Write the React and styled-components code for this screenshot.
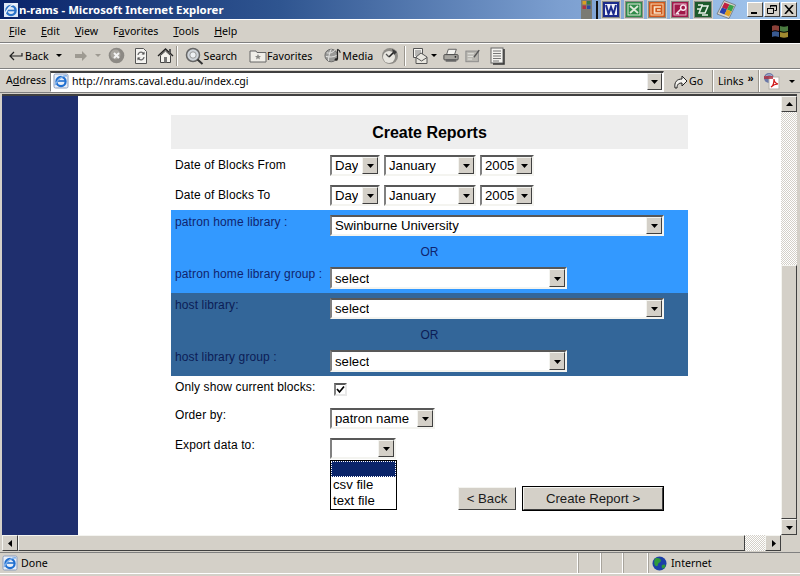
import React from "react";
import styled, { createGlobalStyle } from "styled-components";

const Global = createGlobalStyle`
  html, body { margin: 0; padding: 0; background: #d4d0c8; }
  #root { width: 800px; height: 576px; overflow: hidden; }
`;

const UI = `"Noto Sans", "DejaVu Sans", sans-serif`;
const WEB = `"Liberation Sans", Arial, sans-serif`;

const Win = styled.div`
  width: 800px; height: 576px; display: flex; flex-direction: column;
  background: #d4d0c8; overflow: hidden; font-family: ${UI}; color: #000;
`;
const TitleBar = styled.div`
  height: 19px; flex: none; display: flex; align-items: center; padding: 0 3px 0 3px;
  background: linear-gradient(90deg, #0a246a 0%, #2f5590 35%, #7c9fd0 70%, #a6caf0 100%);
`;
const TitleText = styled.span`
  color: #fff; font: bold 11.4px ${UI}; margin-left: 0; white-space: nowrap;
`;
const Tray = styled.div`
  margin-left: auto; display: flex; align-items: center; gap: 3px; margin-right: 11px;
`;
const TrayDivider = styled.span`
  width: 2px; height: 18px; background: #111; margin: 0 0 0 1px;
`;
const WinButtons = styled.div` display: flex; gap: 1px; `;
const WinButton = styled.button`
  width: 16px; height: 15px; padding: 0;
  background: #d4d0c8; border: 1px solid; border-color: #fff #404040 #404040 #fff;
  display: flex; align-items: center; justify-content: center;
`;
const MenuBar = styled.div`
  flex: none; display: flex; align-items: center; position: relative; box-sizing: border-box; height: 24px;
  border-top: 1px solid #fff; border-bottom: 1px solid #808080; padding: 0 0 1px 9px; gap: 15px;
  font-size: 10.6px;
`;
const MenuItem = styled.span` u { text-decoration: underline; } `;
const Flag = styled.div`
  position: absolute; right: 0; top: 0; width: 40px; height: 23px; background: #000;
  display: flex; align-items: center; justify-content: center;
`;
const Toolbar = styled.div`
  box-sizing: border-box; height: 26px; flex: none; display: flex; align-items: center; padding: 0 0 1px 8px;
  border-top: 1px solid #fff; border-bottom: 1px solid #808080;
  font-size: 10.6px;
`;
const Tool = styled.div`
  display: flex; align-items: center; gap: ${p => p.$gap ?? 0}px; margin-left: ${p => p.$ml || 0}px; white-space: nowrap;
`;
const Sep = styled.span`
  width: 1px; height: 20px; background: #9a968e; border-right: 1px solid #fff; flex: none;
  margin: 0 ${p => p.$r}px 0 ${p => p.$l}px;
`;
const Caret = styled.span`
  width: 0; height: 0; border: 3px solid transparent; border-top: 3px solid ${p => p.$c || "#000"}; border-bottom: 0; display: inline-block;
`;
const AddressBar = styled.div`
  box-sizing: border-box; height: 24px; flex: none; display: flex; align-items: center; padding-left: 6px;
  border-top: 1px solid #fff; border-bottom: 1px solid #808080; font-size: 10.6px;
`;
const AddressLabel = styled.span` width: 44px; flex: none; padding-bottom: 2px; `;
const AddressInput = styled.div`
  width: 614px; height: 21px; box-sizing: border-box; flex: none; background: #fff;
  border: 1px solid; border-color: #404040 #fff #fff #808080; border-top-width: 2px;
  display: flex; align-items: center; padding: 0 0 1px 2px; gap: 3px; position: relative;
  font: 10.6px ${UI};
`;
const AddressArrow = styled.span`
  position: absolute; right: 1px; top: 0; bottom: 1px; width: 15px;
  background: #d4d0c8; border: 1px solid; border-color: #eee #404040 #404040 #eee; box-sizing: border-box;
  display: flex; align-items: center; justify-content: center;
`;
const AddrCell = styled.div`
  height: 22px; display: flex; align-items: center; flex: none; box-sizing: border-box;
  width: ${p => p.$w}px; padding-left: ${p => p.$pl || 0}px; gap: ${p => p.$gap || 0}px;
  border-right: ${p => p.$line ? "1px solid #fff" : "0"};
  box-shadow: ${p => p.$line ? "inset -1px 0 0 #9a968e" : "none"};
`;
const Chevron = styled.span` font: bold 11px ${WEB}; position: relative; top: -3px; `;
const Viewport = styled.div`
  flex: 1; min-height: 0; display: flex; margin: 1px 3px 0 2px;
  border-top: 2px solid #404040;
`;
const Sidebar = styled.div` width: 76px; flex: none; background: #1f2f6e; `;
const Page = styled.div` flex: 1; background: #fff; padding: 19px 0 0 93px; min-width: 0; `;
const VBar = styled.div` width: 16px; flex: none; display: flex; flex-direction: column; background: #d4d0c8; `;
const ScrollBtn = styled.div`
  width: 16px; height: 16px; flex: none; box-sizing: border-box;
  background: #d4d0c8; border: 1px solid; border-color: #f4f4f0 #404040 #404040 #f4f4f0;
  display: flex; align-items: center; justify-content: center;
`;
const Dither = styled.div`
  flex: none; ${p => p.$h ? `height:${p.$h}px;` : ""} ${p => p.$w ? `width:${p.$w}px;` : ""}
  background-color: #f2f0ec;
  background-image: conic-gradient(#d4d0c8 25%, #fff 0 50%, #d4d0c8 0 75%, #fff 0);
  background-size: 2px 2px;
`;
const Thumb = styled.div`
  flex: 1; background: #d4d0c8; box-sizing: border-box;
  border: 1px solid; border-color: #f4f4f0 #404040 #404040 #f4f4f0;
`;
const HBar = styled.div`
  height: 16px; flex: none; display: flex; margin: 0 3px 0 2px; background: #d4d0c8;
`;
const HCorner = styled.div` width: 16px; flex: none; `;
const StatusBar = styled.div`
  box-sizing: border-box; height: 22px; flex: none; display: flex; align-items: center; margin: 1px 0 2px;
  border-top: 1px solid #808080; border-bottom: 1px solid #fff; font-size: 10.6px;
`;
const StatusMain = styled.div` width: 577px; flex: none; display: flex; align-items: center; gap: 3px; padding-left: 2px; box-sizing: border-box; `;
const StatusCell = styled.div`
  height: 20px; width: ${p => p.$w}px; flex: none; box-sizing: border-box; border-left: 1px solid #fff;
  box-shadow: inset 1px 0 0 #a8a49c; display: flex; align-items: center; gap: 4px; padding-left: ${p => p.$pl || 0}px;
`;

/* form */
const Form = styled.div` width: 517px; font: 12px ${WEB}; letter-spacing: .12px; position: relative; `;
const FormTitle = styled.h1`
  margin: 0; height: 34px; box-sizing: border-box; padding-top: 1px; background: #eeeeee; font: bold 16px ${WEB}; letter-spacing: 0;
  display: flex; align-items: center; justify-content: center;
`;
const Row = styled.div`
  display: grid; grid-template-columns: 151px 1fr; column-gap: 4px; box-sizing: border-box; padding: ${p => p.$pad || "0"}; margin-left: 4px;
  height: ${p => p.$h}px; color: #000;
`;
const Panel = styled.section`
  background: ${p => p.$bg}; color: ${p => p.$fg}; height: 83px;
  display: flex; flex-direction: column; padding-top: 5px; box-sizing: border-box;
  ${Row} { color: inherit; }
`;
const Label = styled.label` display: block; padding-top: ${p => p.$t ?? 3}px; line-height: 15px; white-space: nowrap; `;
const Or = styled.div`
  height: 31px; display: flex; align-items: center; justify-content: center; font-size: 12px;
`;
const Controls = styled.div` display: flex; gap: 4px; align-items: flex-start; `;
const SelectBox = styled.div`
  width: ${p => p.$w}px; height: ${p => p.$h || 21}px; box-sizing: border-box; flex: none; background: #fff;
  border: 2px solid; border-color: #585858 #f4f4f0 #f4f4f0 #808080;
  display: flex; align-items: stretch; justify-content: space-between;
  font: 13.2px ${WEB}; letter-spacing: 0; color: #000;
`;
const SelectValue = styled.span` padding: ${p => p.$t}px 0 0 3px; line-height: 15px; white-space: nowrap; overflow: hidden; `;
const SelectArrow = styled.span`
  width: 16px; flex: none; box-sizing: border-box; background: #d4d0c8;
  border: 1px solid; border-color: #f4f4f0 #404040 #404040 #f4f4f0;
  display: flex; align-items: center; justify-content: center;
`;
const Check = styled.span`
  display: flex; width: 13px; height: 13px; margin: 7px 0 0 4px; box-sizing: border-box; background: #fff;
  border: 2px solid; border-color: #585858 #e8e8e8 #e8e8e8 #808080; align-items: center; justify-content: center;
`;
const ExportWrap = styled.div` position: relative; `;
const DropList = styled.ul`
  position: absolute; left: 0; top: 22px; width: 67px; height: 50px; margin: 0; padding: 0; list-style: none;
  box-sizing: border-box; background: #fff; border: 1px solid #000; font: 13.2px/16px ${WEB}; letter-spacing: 0;
`;
const DropItem = styled.li`
  height: 16px; padding-left: 2px; white-space: nowrap;
  ${p => p.$sel ? "background: #0a246a; outline: 1px dotted #fff; outline-offset: -1px;" : ""}
`;
const Buttons = styled.div` display: flex; gap: 7px; align-items: center; margin: 0 0 0 287px; padding-top: 28px; `;
const Button = styled.button`
  width: ${p => p.$w}px; height: 23px; padding: 0; box-sizing: border-box; background: #d4d0c8;
  font: 13.2px ${WEB}; color: #1a1a1a;
  border: 1px solid; border-color: #f4f4f0 #404040 #404040 #f4f4f0;
  box-shadow: ${p => p.$primary ? "0 0 0 1px #000" : "none"};
`;

/* icons */
const Tri = ({ dir = "down", c = "#000" }) => (
  <svg width="9" height="9" viewBox="0 0 9 9">
    {dir === "down" && <path d="M1 3h7L4.5 7z" fill={c} />}
    {dir === "up" && <path d="M1 6h7L4.5 2z" fill={c} />}
    {dir === "left" && <path d="M6 1v7L2 4.5z" fill={c} />}
    {dir === "right" && <path d="M3 1v7l4-3.5z" fill={c} />}
  </svg>
);
const IEIcon = ({ s = 16 }) => (
  <svg width={s} height={s} viewBox="0 0 16 16">
    <rect x="1" y="1" width="14" height="14" rx="1.5" fill="#e8eef8" stroke="#8a9dbd" />
    <circle cx="8" cy="8.5" r="4.6" fill="none" stroke="#1f6fd0" strokeWidth="2.2" />
    <path d="M3 8h10" stroke="#1f6fd0" strokeWidth="1.6" />
    <path d="M2 12C5 5 11 2 14 3" fill="none" stroke="#7fb0ea" strokeWidth="1.4" />
  </svg>
);
const TitleIE = () => (
  <svg width="16" height="16" viewBox="0 0 16 16">
    <rect x="1" y="1" width="14" height="14" fill="#dfe8f6" />
    <circle cx="8" cy="8.5" r="4.6" fill="none" stroke="#2a72c8" strokeWidth="2.4" />
    <path d="M3.5 8.5h9" stroke="#2a72c8" strokeWidth="1.6" />
    <path d="M2 12C5 4 11 1 14 2" fill="none" stroke="#f4f8ff" strokeWidth="1.2" />
  </svg>
);
const BackIcon = () => (
  <svg width="16" height="14" viewBox="0 0 16 14">
    <path d="M6 3L2 7l4 4M2.5 7H14V4" fill="none" stroke="#222" strokeWidth="1.2" />
  </svg>
);
const ForwardIcon = () => (
  <svg width="16" height="14" viewBox="0 0 16 14">
    <path d="M2 5h7V2l5 5-5 5V9H2z" fill="#9e9a92" />
  </svg>
);
const StopIcon = () => (
  <svg width="17" height="17" viewBox="0 0 17 17">
    <circle cx="8.5" cy="8.5" r="7.8" fill="#8c8984" />
    <circle cx="7.5" cy="7.5" r="5" fill="#a8a59f" />
    <path d="M6 6l5 5M11 6l-5 5" stroke="#f4f4f4" strokeWidth="2" />
  </svg>
);
const RefreshIcon = () => (
  <svg width="16" height="18" viewBox="0 0 16 18">
    <path d="M2.5 1.5h8l3 3v12h-11z" fill="#f4f3f0" stroke="#555" />
    <path d="M5 8a3 3 0 0 1 5-2l1 1M11 10a3 3 0 0 1-5 2l-1-1" fill="none" stroke="#6a6a6a" strokeWidth="1.3" />
    <path d="M11.5 4.5v3h-3zM4.5 13.5v-3h3z" fill="#555" />
  </svg>
);
const HomeIcon = () => (
  <svg width="17" height="17" viewBox="0 0 17 17">
    <path d="M1 9l7.5-7L16 9" fill="none" stroke="#222" strokeWidth="1.4" />
    <path d="M3.5 8.5V15.5h10V8.5L8.5 4z" fill="#f4f3ee" stroke="#444" />
    <rect x="7" y="10" width="3" height="5.5" fill="#777" />
    <rect x="12" y="2" width="2" height="4" fill="#555" />
  </svg>
);
const SearchIcon = () => (
  <svg width="19" height="18" viewBox="0 0 19 18">
    <circle cx="8" cy="8" r="6.5" fill="#cfd4da" stroke="#666" strokeWidth="1.5" />
    <circle cx="8" cy="8" r="3.2" fill="#eef1f4" stroke="#999" />
    <path d="M12.5 12.5l5 4.5" stroke="#333" strokeWidth="2" />
  </svg>
);
const FavIcon = () => (
  <svg width="18" height="15" viewBox="0 0 18 15">
    <path d="M1 3h6l1 1.5h9V14H1z" fill="#f0eee8" stroke="#666" />
    <path d="M9 6l1 2h2l-1.6 1.4.6 2.1L9 10.3 7 11.5l.6-2.1L6 8h2z" fill="#8a8a86" />
  </svg>
);
const MediaIcon = () => (
  <svg width="18" height="17" viewBox="0 0 20 18">
    <circle cx="8" cy="9" r="7" fill="#9a9a98" stroke="#666" />
    <path d="M3 6c3 1 7 0 9-3M2 10c4 1 8 1 12-1M5 15c0-4 1-9 3-13" fill="none" stroke="#e4e4e2" strokeWidth="1.1" />
    <path d="M15 2v11M15 2c2 1 3 2 3 4" fill="none" stroke="#222" strokeWidth="1.3" />
    <ellipse cx="13.6" cy="13.4" rx="1.8" ry="1.3" fill="#222" />
  </svg>
);
const HistoryIcon = () => (
  <svg width="18" height="18" viewBox="0 0 18 18">
    <circle cx="9" cy="9" r="8" fill="#8f8d88" />
    <circle cx="8" cy="10" r="6" fill="#e8e6e0" />
    <path d="M8 10l6-6" stroke="#222" strokeWidth="1.6" />
    <path d="M8 10l-3-3" stroke="#555" strokeWidth="1.2" />
    <path d="M11 2l5 3-3 3z" fill="#3a3a3a" />
  </svg>
);
const MailIcon = () => (
  <svg width="18" height="18" viewBox="0 0 18 18">
    <path d="M1.5 1.5h9v9h-9z" fill="#f6f5f1" stroke="#555" />
    <path d="M3 4h6M3 6h6M3 8h4" stroke="#777" />
    <path d="M4 16.5V10l5-4 6 4v6.5z" fill="#e8e6df" stroke="#555" />
    <path d="M4 10.5l5.5 3.5 5.5-3.5" fill="none" stroke="#555" />
  </svg>
);
const PrintIcon = () => (
  <svg width="16" height="15" viewBox="0 0 18 16">
    <path d="M6 1h9l-2 6H4z" fill="#f4f3ef" stroke="#555" />
    <rect x="1" y="7" width="16" height="6" rx="1" fill="#a8a6a0" stroke="#444" />
    <rect x="3" y="12" width="12" height="3" fill="#666" />
    <circle cx="14" cy="9.5" r="1" fill="#222" />
  </svg>
);
const EditIcon = () => (
  <svg width="16" height="15" viewBox="0 0 18 16">
    <rect x="1" y="3" width="14" height="12" fill="#b9b7b1" stroke="#888" />
    <path d="M3 6h7M3 9h8M3 12h5" stroke="#e8e8e4" />
    <path d="M10 10l6-8" stroke="#555" strokeWidth="1.6" />
  </svg>
);
const DiscussIcon = () => (
  <svg width="16" height="18" viewBox="0 0 16 18">
    <rect x="1" y="1" width="12" height="15" fill="#f4f3ef" stroke="#666" />
    <path d="M3 4h8M3 6.5h8M3 9h8M3 11.5h8M3 14h6" stroke="#777" />
    <path d="M14 2v15H3" fill="none" stroke="#333" strokeWidth="1.5" />
  </svg>
);
const GoIcon = () => (
  <svg width="15" height="17" viewBox="0 0 15 17">
    <path d="M2 15C1 9 4 6 9 6V3l5 5-5 5v-3C6 10 4 11 4 15z" fill="#f4f3ef" stroke="#222" />
  </svg>
);
const PdfIcon = () => (
  <svg width="19" height="18" viewBox="0 0 19 18">
    <circle cx="6" cy="6" r="5" fill="#6a78a8" />
    <path d="M2 5c3-3 6-3 8 0" stroke="#c4c8d8" fill="none" />
    <rect x="6" y="5" width="10" height="12" fill="#fff" stroke="#b8b4ac" />
    <path d="M1 4h9v3H1z" fill="#b03040" opacity=".8" />
    <path d="M8 15c2-1 3-5 3-8 0 3 1 4 4 5-3 0-5 1-7 3z" fill="none" stroke="#d01818" strokeWidth="1.2" />
  </svg>
);
const GlobeIcon = () => (
  <svg width="15" height="15" viewBox="0 0 15 15">
    <circle cx="7.5" cy="7.5" r="7" fill="#1c3fa8" />
    <path d="M3 2.5c3-1 6 0 6 2s-3 2-3 4-2 2-3 1-1-5 0-7zM10 9c2-1 3.5-.5 3.5 1s-2 3-3 2.5-1-3-.5-3.5z" fill="#2f9a3c" />
  </svg>
);
const TrayTile = ({ bg, fg = "#fff", letter }) => (
  <svg width="20" height="19" viewBox="0 0 20 19">
    <rect width="20" height="19" fill="#d0ccc4" />
    <rect x="1" y="1" width="18" height="17" fill="#8a8a86" />
    <rect x="2" y="2" width="16" height="15" fill={bg} />
    {letter === "W" && <>
      <rect x="4" y="4" width="12" height="11" fill="#f0f0f8" />
      <path d="M5 5l2.5 9L10 7l2.5 7L15 5" fill="none" stroke={bg} strokeWidth="2" />
    </>}
    {letter === "X" && <>
      <rect x="4" y="4" width="12" height="11" fill="none" stroke="#dfe8d8" />
      <path d="M6 6l8 7M14 6l-8 7" stroke={fg} strokeWidth="1.8" />
    </>}
    {letter === "P" && <>
      <rect x="4" y="4" width="12" height="11" fill="none" stroke="#f8d8b0" />
      <path d="M14 7H7.5v6H14M10 10h3.5" fill="none" stroke={fg} strokeWidth="1.7" />
    </>}
    {letter === "K" && <>
      <rect x="4" y="4" width="12" height="11" fill="none" stroke="#e8b8cc" />
      <path d="M6 14l5-5M11 9a2.6 2.6 0 1 0 2-4 2.6 2.6 0 0 0-2 4zM7 13l2 1" fill="none" stroke={fg} strokeWidth="1.5" />
    </>}
    {letter === "O" && <path d="M6 13l3-7h6l-3 7zM5 5h5M9 15h6M4 9h4" fill="none" stroke={fg} strokeWidth="1.5" />}
  </svg>
);
const ColorTile = () => (
  <svg width="20" height="19" viewBox="0 0 20 19">
    <path d="M8 .5L19.5 5 13 18.5 1 14z" fill="#d8d4cc" stroke="#555" strokeWidth=".6" />
    <path d="M8.5 2.5L13.5 4.5 11 9.5 6 7.5z" fill="#c02040" />
    <path d="M13.5 4.5L18 6l-2.5 5.5L11 9.5z" fill="#38a048" />
    <path d="M6 7.5l5 2-2.5 5-5-2z" fill="#2840b0" />
    <path d="M11 9.5l4.5 2-2.5 5-4.5-2z" fill="#e0a020" />
  </svg>
);
const StartTile = () => (
  <svg width="11" height="19" viewBox="0 0 11 19">
    <rect width="11" height="19" fill="#7a7a74" />
    <rect x="1.5" y="1" width="3.5" height="3.5" fill="#d8a020" />
    <rect x="6" y="1" width="3.5" height="3.5" fill="#2f7a48" />
    <rect x="1.5" y="5.5" width="3.5" height="3.5" fill="#b03040" />
    <rect x="6" y="5.5" width="3.5" height="3.5" fill="#2848a0" />
  </svg>
);
const WinFlag = () => (
  <svg width="20" height="18" viewBox="0 0 20 18">
    <path d="M2 3c2-1 4-1 7 0v5C6 7 4 7 2 8z" fill="#8a4038" />
    <path d="M10 3c3 1 5 1 8 0v5c-3 1-5 1-8 0z" fill="#4a7a40" />
    <path d="M2 9c2-1 4-1 7 0v5c-3-1-5-1-7 0z" fill="#3a5a90" />
    <path d="M10 9c3 1 5 1 8 0v5c-3 1-5 1-8 0z" fill="#a08a30" />
  </svg>
);

const Select = ({ w, h, children }) => (
  <SelectBox $w={w} $h={h}>
    <SelectValue $t={h ? 2 : 1}>{children}</SelectValue>
    <SelectArrow><Tri /></SelectArrow>
  </SelectBox>
);

export default function App() {
  return (
    <Win>
      <Global />
      <TitleBar>
        <TitleIE />
        <TitleText>n-rams - Microsoft Internet Explorer</TitleText>
        <Tray>
          <StartTile />
          <TrayDivider />
          <TrayTile bg="#1c2a8c" letter="W" />
          <TrayTile bg="#2f8a48" letter="X" fg="#dfe8d8" />
          <TrayTile bg="#d0581c" letter="P" fg="#f8e4c8" />
          <TrayTile bg="#a01848" letter="K" fg="#f4e4ec" />
          <TrayTile bg="#1c5a2c" letter="O" fg="#e8f0e8" />
          <ColorTile />
        </Tray>
        <WinButtons>
          <WinButton aria-label="Minimize">
            <svg width="10" height="9" viewBox="0 0 10 9"><rect x="1" y="7" width="6" height="2" fill="#000" /></svg>
          </WinButton>
          <WinButton aria-label="Restore">
            <svg width="10" height="9" viewBox="0 0 10 9"><path d="M3.5 2.5V.5h6v5h-2M.5 3.5h6v5h-6z" fill="none" stroke="#000" /><path d="M3 1h7M0 3.5h7" stroke="#000" /></svg>
          </WinButton>
          <WinButton aria-label="Close">
            <svg width="10" height="9" viewBox="0 0 10 9"><path d="M1 0l8 9M9 0L1 9" stroke="#000" strokeWidth="1.6" /></svg>
          </WinButton>
        </WinButtons>
      </TitleBar>

      <MenuBar>
        <MenuItem><u>F</u>ile</MenuItem>
        <MenuItem><u>E</u>dit</MenuItem>
        <MenuItem><u>V</u>iew</MenuItem>
        <MenuItem>F<u>a</u>vorites</MenuItem>
        <MenuItem><u>T</u>ools</MenuItem>
        <MenuItem><u>H</u>elp</MenuItem>
        <Flag><WinFlag /></Flag>
      </MenuBar>

      <Toolbar>
        <Tool $gap={1}><BackIcon />Back</Tool>
        <Tool $ml={7}><Caret /></Tool>
        <Tool $ml={11}><ForwardIcon /></Tool>
        <Tool $ml={6}><Caret $c="#9e9a92" /></Tool>
        <Tool $ml={7}><StopIcon /></Tool>
        <Tool $ml={8}><RefreshIcon /></Tool>
        <Tool $ml={8}><HomeIcon /></Tool>
        <Sep $l={2} $r={7} />
        <Tool><SearchIcon />Search</Tool>
        <Tool $ml={12}><FavIcon />Favorites</Tool>
        <Tool $ml={12}><MediaIcon />Media</Tool>
        <Tool $ml={8}><HistoryIcon /></Tool>
        <Sep $l={5} $r={6} />
        <Tool $gap={1}><MailIcon /><Caret /></Tool>
        <Tool $ml={6}><PrintIcon /></Tool>
        <Tool $ml={6}><EditIcon /></Tool>
        <Tool $ml={9}><DiscussIcon /></Tool>
      </Toolbar>

      <AddressBar>
        <AddressLabel>A<u>d</u>dress</AddressLabel>
        <AddressInput>
          <IEIcon />
          <span>http://nrams.caval.edu.au/index.cgi</span>
          <AddressArrow><Tri /></AddressArrow>
        </AddressInput>
        <AddrCell $w={50} $pl={9} $gap={1} $line><GoIcon />Go</AddrCell>
        <AddrCell $w={46} $pl={4} $gap={4} $line>Links<Chevron>»</Chevron></AddrCell>
        <AddrCell $w={35} $pl={3} $gap={7}><PdfIcon /><Caret /></AddrCell>
      </AddressBar>

      <Viewport>
        <Sidebar />
        <Page>
          <Form>
            <FormTitle>Create Reports</FormTitle>
            <Row $h={31} $pad="6px 0 0 0">
              <Label>Date of Blocks From</Label>
              <Controls>
                <Select w={50}>Day</Select>
                <Select w={92}>January</Select>
                <Select w={54}>2005</Select>
              </Controls>
            </Row>
            <Row $h={30} $pad="5px 0 0 0">
              <Label>Date of Blocks To</Label>
              <Controls>
                <Select w={50}>Day</Select>
                <Select w={92}>January</Select>
                <Select w={54}>2005</Select>
              </Controls>
            </Row>
            <Panel $bg="#3399ff" $fg="#10246e">
              <Row $h={21}>
                <Label $t={0}>patron home library :</Label>
                <Select w={334}>Swinburne University</Select>
              </Row>
              <Or>OR</Or>
              <Row $h={22}>
                <Label $t={0}>patron home library group :</Label>
                <Select w={237} h={22}>select</Select>
              </Row>
            </Panel>
            <Panel $bg="#336699" $fg="#0c1d56">
              <Row $h={21}>
                <Label $t={0}>host library:</Label>
                <Select w={334}>select</Select>
              </Row>
              <Or>OR</Or>
              <Row $h={22}>
                <Label $t={0}>host library group :</Label>
                <Select w={237} h={22}>select</Select>
              </Row>
            </Panel>
            <Row $h={32}>
              <Label $t={4}>Only show current blocks:</Label>
              <Check>
                <svg width="9" height="9" viewBox="0 0 9 9"><path d="M1 4l2.5 3L8 1.5" fill="none" stroke="#000" strokeWidth="1.7" /></svg>
              </Check>
            </Row>
            <Row $h={30}>
              <Label $t={0}>Order by:</Label>
              <Select w={105}>patron name</Select>
            </Row>
            <Row $h={21}>
              <Label $t={0}>Export data to:</Label>
              <ExportWrap>
                <Select w={66}></Select>
                <DropList>
                  <DropItem $sel />
                  <DropItem>csv file</DropItem>
                  <DropItem>text file</DropItem>
                </DropList>
              </ExportWrap>
            </Row>
            <Buttons>
              <Button $w={58}>&lt; Back</Button>
              <Button $w={140} $primary>Create Report &gt;</Button>
            </Buttons>
          </Form>
        </Page>
        <VBar>
          <ScrollBtn><Tri dir="up" /></ScrollBtn>
          <Dither $h={153} />
          <Thumb />
          <ScrollBtn><Tri /></ScrollBtn>
        </VBar>
      </Viewport>
      <HBar>
        <ScrollBtn><Tri dir="left" /></ScrollBtn>
        <Thumb />
        <Dither $w={20} />
        <ScrollBtn><Tri dir="right" /></ScrollBtn>
        <HCorner />
      </HBar>
      <StatusBar>
        <StatusMain><IEIcon /><span>Done</span></StatusMain>
        <StatusCell $w={23} />
        <StatusCell $w={22} />
        <StatusCell $w={25} />
        <StatusCell $w={153} $pl={4}><GlobeIcon />Internet</StatusCell>
      </StatusBar>
    </Win>
  );
}
